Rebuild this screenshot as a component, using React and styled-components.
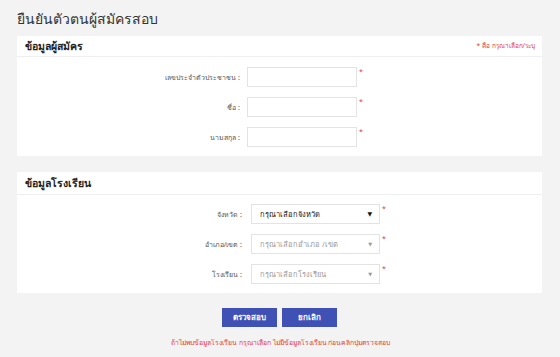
import React from "react";
import styled, { createGlobalStyle } from "styled-components";

const Global = createGlobalStyle`
  html, body { margin: 0; padding: 0; background: #f3f3f3; }
  body { font-family: "Noto Sans", "DejaVu Sans", sans-serif; color: #333; }
  * { box-sizing: border-box; }
`;

const Page = styled.div`
  width: 560px;
  height: 357px;
  padding: 0 18px 0 17px;
  display: flex;
  flex-direction: column;
`;

const Title = styled.h1`
  margin: 0;
  height: 36px;
  padding-top: 9px;
  font-size: 14px;
  font-weight: 400;
  line-height: 20px;
  color: #333;
`;

const Panel = styled.section`
  background: #fff;
  margin-bottom: ${(p) => p.$mb}px;
`;

const PanelHead = styled.div`
  height: ${(p) => p.$h}px;
  border-bottom: 1px solid #efefef;
  display: flex;
  align-items: center;
  justify-content: space-between;
  padding: 0 7px 0 8px;
`;

const HeadTitle = styled.span`
  font-size: 10.5px;
  font-weight: 600;
  color: #222;
`;

const Note = styled.span`
  font-size: 6.5px;
  color: #e53935;
`;

const PanelBody = styled.div`
  display: flex;
  flex-direction: column;
  gap: ${(p) => p.$gap}px;
  padding: ${(p) => p.$pt}px 0 ${(p) => p.$pb}px;
`;

const Row = styled.div`
  display: grid;
  grid-template-columns: ${(p) => p.$lw}px auto;
  column-gap: ${(p) => p.$gap}px;
  align-items: center;
  height: 20px;
`;

const Field = styled.div`
  display: flex;
  align-items: flex-start;
  gap: 2px;
`;

const Label = styled.label`
  text-align: right;
  font-size: 7px;
  color: #555;
`;

const Input = styled.div`
  width: 110px;
  height: 20px;
  border: 1px solid #e3e3e3;
  background: #fff;
`;

const Select = styled.div`
  width: 129px;
  height: 20px;
  border: 1px solid #e3e3e3;
  background: #fff;
  display: flex;
  align-items: center;
  justify-content: space-between;
  padding: 0 7px 0 8px;
  font-size: 7.5px;
  color: ${(p) => (p.$active ? "#111" : "#999")};
`;

const Arrow = styled.span`
  font-size: ${(p) => (p.$active ? 6 : 5)}px;
  color: ${(p) => (p.$active ? "#111" : "#999")};
`;

const Star = styled.span`
  color: #e53935;
  font-size: 7px;
  line-height: 1;
  margin-top: 1px;
`;

const Buttons = styled.div`
  display: flex;
  justify-content: center;
  gap: 5px;
`;

const Button = styled.button`
  width: 55px;
  height: 19px;
  border: 0;
  background: #3f51b5;
  color: #fff;
  font-family: inherit;
  font-size: 8px;
  font-weight: 600;
  padding: 0;
`;

const Warn = styled.p`
  margin: 10px 0 0;
  font-size: 6.8px;
  color: #e53935;
  padding-left: 154px;
`;

const people = ["เลขประจำตัวประชาชน :", "ชื่อ :", "นามสกุล :"];
const school = [
  { label: "จังหวัด :", text: "กรุณาเลือกจังหวัด", active: true },
  { label: "อำเภอ/เขต :", text: "กรุณาเลือกอำเภอ /เขต" },
  { label: "โรงเรียน :", text: "กรุณาเลือกโรงเรียน" },
];

export default function App() {
  return (
    <>
      <Global />
      <Page>
        <Title>ยืนยันตัวตนผู้สมัครสอบ</Title>
        <Panel $mb={16}>
          <PanelHead $h={21}>
            <HeadTitle>ข้อมูลผู้สมัคร</HeadTitle>
            <Note>* คือ กรุณาเลือก/ระบุ</Note>
          </PanelHead>
          <PanelBody $gap={10} $pt={10} $pb={9}>
            {people.map((l) => (
              <Row key={l} $lw={223} $gap={7}>
                <Label>{l}</Label>
                <Field>
                  <Input />
                  <Star>*</Star>
                </Field>
              </Row>
            ))}
          </PanelBody>
        </Panel>
        <Panel $mb={15}>
          <PanelHead $h={23}>
            <HeadTitle>ข้อมูลโรงเรียน</HeadTitle>
          </PanelHead>
          <PanelBody $gap={10} $pt={9} $pb={9}>
            {school.map((s) => (
              <Row key={s.label} $lw={225} $gap={9}>
                <Label>{s.label}</Label>
                <Field>
                  <Select $active={s.active}>
                    <span>{s.text}</span>
                    <Arrow $active={s.active}>▼</Arrow>
                  </Select>
                  <Star>*</Star>
                </Field>
              </Row>
            ))}
          </PanelBody>
        </Panel>
        <Buttons>
          <Button>ตรวจสอบ</Button>
          <Button>ยกเลิก</Button>
        </Buttons>
        <Warn>ถ้าไม่พบข้อมูลโรงเรียน กรุณาเลือก ไม่มีข้อมูลโรงเรียน ก่อนคลิกปุ่มตรวจสอบ</Warn>
      </Page>
    </>
  );
}
